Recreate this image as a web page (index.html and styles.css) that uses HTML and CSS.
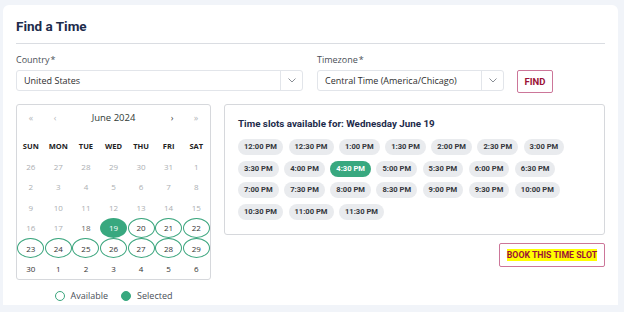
FILE: index.html
```html
<!DOCTYPE html>
<html lang="en">
<head>
    <meta charset="UTF-8">
    <title>Find a Time</title>
    <link rel="stylesheet" href="styles.css">
</head>
<body>
    <div class="card">
        <h1 class="title">Find a Time</h1>

        <div class="search">
            <div class="field">
                <label>Country<span class="req">*</span></label>
                <div class="select">
                    <span class="select-value">United States</span>
                    <span class="select-arrow">
                        <svg width="8" height="5" viewBox="0 0 8 5"><polyline points="0.5,0.5 4,4 7.5,0.5" fill="none" stroke="#8a8f96" stroke-width="1"/></svg>
                    </span>
                </div>
            </div>
            <div class="field">
                <label>Timezone<span class="req">*</span></label>
                <div class="select">
                    <span class="select-value">Central Time (America/Chicago)</span>
                    <span class="select-arrow">
                        <svg width="8" height="5" viewBox="0 0 8 5"><polyline points="0.5,0.5 4,4 7.5,0.5" fill="none" stroke="#8a8f96" stroke-width="1"/></svg>
                    </span>
                </div>
            </div>
            <button class="btn find-btn">FIND</button>
        </div>

        <div class="main">
            <div class="cal-col">
                <div class="calendar">
                    <div class="cal-head">
                        <span class="nav">&laquo;</span>
                        <span class="nav">&lsaquo;</span>
                        <span class="month">June 2024</span>
                        <span class="nav dark">&rsaquo;</span>
                        <span class="nav">&raquo;</span>
                    </div>
                    <div class="cal-grid">
                        <span class="dow">SUN</span><span class="dow">MON</span><span class="dow">TUE</span><span class="dow">WED</span><span class="dow">THU</span><span class="dow">FRI</span><span class="dow">SAT</span>

                        <span class="day off">26</span><span class="day off">27</span><span class="day off">28</span><span class="day off">29</span><span class="day off">30</span><span class="day off">31</span><span class="day off">1</span>
                        <span class="day off">2</span><span class="day off">3</span><span class="day off">4</span><span class="day off">5</span><span class="day off">6</span><span class="day off">7</span><span class="day off">8</span>
                        <span class="day off">9</span><span class="day off">10</span><span class="day off">11</span><span class="day off">12</span><span class="day off">13</span><span class="day off">14</span><span class="day off">15</span>
                        <span class="day off">16</span><span class="day off">17</span><span class="day today">18</span><span class="day"><i class="selected">19</i></span><span class="day"><i class="avail">20</i></span><span class="day"><i class="avail">21</i></span><span class="day"><i class="avail">22</i></span>
                        <span class="day"><i class="avail">23</i></span><span class="day"><i class="avail">24</i></span><span class="day"><i class="avail">25</i></span><span class="day"><i class="avail">26</i></span><span class="day"><i class="avail">27</i></span><span class="day"><i class="avail">28</i></span><span class="day"><i class="avail">29</i></span>
                        <span class="day">30</span><span class="day">1</span><span class="day">2</span><span class="day">3</span><span class="day">4</span><span class="day">5</span><span class="day">6</span>
                    </div>
                </div>
                <div class="legend">
                    <span class="dot"></span><span class="legend-text">Available</span>
                    <span class="dot filled"></span><span class="legend-text">Selected</span>
                </div>
            </div>

            <div class="slots-col">
                <div class="slots">
                    <h2 class="slots-title">Time slots available for: Wednesday June 19</h2>
                    <div class="pills">
                        <span class="pill">12:00 PM</span>
                        <span class="pill">12:30 PM</span>
                        <span class="pill">1:00 PM</span>
                        <span class="pill">1:30 PM</span>
                        <span class="pill">2:00 PM</span>
                        <span class="pill">2:30 PM</span>
                        <span class="pill">3:00 PM</span>
                        <span class="pill">3:30 PM</span>
                        <span class="pill">4:00 PM</span>
                        <span class="pill active">4:30 PM</span>
                        <span class="pill">5:00 PM</span>
                        <span class="pill">5:30 PM</span>
                        <span class="pill">6:00 PM</span>
                        <span class="pill">6:30 PM</span>
                        <span class="pill">7:00 PM</span>
                        <span class="pill">7:30 PM</span>
                        <span class="pill">8:00 PM</span>
                        <span class="pill">8:30 PM</span>
                        <span class="pill">9:00 PM</span>
                        <span class="pill">9:30 PM</span>
                        <span class="pill">10:00 PM</span>
                        <span class="pill">10:30 PM</span>
                        <span class="pill">11:00 PM</span>
                        <span class="pill">11:30 PM</span>
                    </div>
                </div>
                <div class="book-row">
                    <button class="btn book-btn"><mark>BOOK THIS TIME SLOT</mark></button>
                </div>
            </div>
        </div>
    </div>
</body>
</html>
```

FILE: styles.css
```css
body {
    margin: 0;
    background: #f1f4f9;
    font-family: 'Open Sans', 'Noto Sans', sans-serif;
    color: #333;
}

.card {
    margin: 5px 6px 0 3px;
    background: #fff;
    border-radius: 6px 6px 0 0;
    padding: 11px 13px 20px 13px;
    height: 300px;
    box-sizing: border-box;
}

.title {
    margin: 0;
    font-family: Roboto, sans-serif;
    font-size: 13.5px;
    line-height: 20px;
    font-weight: 700;
    color: #1d2b4b;
    padding-bottom: 7px;
    border-bottom: 1px solid #dadde2;
}

/* search row */
.search {
    display: grid;
    grid-template-columns: 287px 187px 35px;
    column-gap: 14px;
    align-items: end;
    margin-top: 9px;
}

.search .btn {
    margin-left: -1px;
}

.field label {
    display: block;
    font-size: 9px;
    line-height: 14px;
    color: #4a4f57;
    margin-bottom: 3px;
}

.req {
    margin-left: 1px;
}

.select {
    display: flex;
    height: 21px;
    border: 1px solid #e2e5ea;
    border-radius: 3px;
    box-sizing: border-box;
}

.select-value {
    flex: 1;
    padding-left: 7px;
    font-size: 9px;
    line-height: 19px;
    color: #2e2e2e;
}

.select-arrow {
    width: 21px;
    border-left: 1px solid #e2e5ea;
    display: flex;
    align-items: center;
    justify-content: center;
}

.btn {
    background: #fff;
    border: 1px solid #cc7699;
    border-radius: 2px;
    font-family: Roboto, sans-serif;
    font-weight: 700;
    color: #9b1237;
    padding: 0;
    cursor: pointer;
}

.find-btn {
    height: 23px;
    font-size: 9.5px;
    margin-bottom: -2px;
}

/* main area */
.main {
    display: grid;
    grid-template-columns: 195px 381px;
    column-gap: 13px;
    margin-top: 13px;
}

.calendar {
    border: 1px solid #d6d8dc;
    border-radius: 3px;
}

.cal-head {
    display: grid;
    grid-template-columns: 24px 24px 1fr 24px 24px;
    height: 24px;
    align-items: center;
    padding: 0 2px;
    text-align: center;
    font-size: 9.5px;
}

.nav {
    color: #b5b8bc;
    font-size: 9px;
}

.nav.dark {
    color: #444;
}

.month {
    color: #2f3b36;
}

.cal-grid {
    display: grid;
    grid-template-columns: repeat(7, 1fr);
    grid-template-rows: 20px repeat(6, 20.5px);
    margin-top: 7px;
    text-align: center;
}

.dow {
    font-size: 7.5px;
    font-weight: 700;
    line-height: 20px;
    color: #222;
}

.day {
    font-size: 8px;
    color: #333;
    display: flex;
    align-items: center;
    justify-content: center;
}

.day.off {
    color: #acafb3;
}

.day.today {
    color: #666;
}

.day i {
    font-style: normal;
    width: 27px;
    height: 20px;
    box-sizing: border-box;
    border-radius: 50%;
    display: flex;
    align-items: center;
    justify-content: center;
}

.avail {
    border: 1.5px solid #3aa57d;
}

.selected {
    background: #38a87f;
    color: #fff;
}

.legend {
    display: flex;
    justify-content: center;
    align-items: center;
    margin-top: 9px;
    font-size: 9px;
    line-height: 14px;
    color: #4a4f57;
}

.legend-text {
    margin-left: 6px;
}

.dot {
    width: 10px;
    height: 10px;
    border-radius: 50%;
    box-sizing: border-box;
    border: 1.5px solid #3aa57d;
}

.dot.filled {
    background: #38a87f;
    border-color: #38a87f;
    margin-left: 13px;
}

/* time slots */
.slots {
    border: 1px solid #d6d8dc;
    border-radius: 3px;
    padding: 12px 13px 14px 13px;
}

.slots-title {
    margin: 0 0 8px 0;
    font-family: Roboto, sans-serif;
    font-size: 9.8px;
    line-height: 14px;
    font-weight: 700;
    color: #1d2b4b;
}

.pills {
    display: flex;
    flex-wrap: wrap;
    gap: 5.7px 5.5px;
}

.pill {
    height: 16px;
    line-height: 16px;
    padding: 0 6px;
    border-radius: 8px;
    background: #e9ebee;
    font-family: Roboto, sans-serif;
    font-size: 7.6px;
    font-weight: 700;
    color: #33363b;
}

.pill.active {
    background: #38a87f;
    color: #fff;
}

.book-row {
    display: flex;
    justify-content: flex-end;
    margin-top: 8px;
}

.book-btn {
    width: 106px;
    height: 24px;
    border-width: 1.5px;
    font-size: 8.75px;
}

.book-btn mark {
    background: #ffff00;
    color: #9b1237;
    padding: 1px 0;
}
```
